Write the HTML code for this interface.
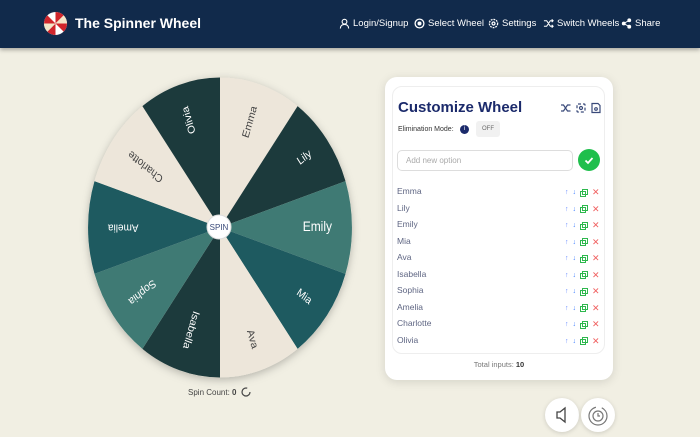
<!DOCTYPE html>
<html><head><meta charset="utf-8"><style>
*{margin:0;padding:0;box-sizing:border-box}
body{width:700px;height:428px;overflow:hidden;background:#f1efe3;font-family:"Liberation Sans",sans-serif;position:relative}
.hdr{position:absolute;left:0;top:0;width:700px;height:48px;background:#112a4b;box-shadow:0 2px 4px rgba(0,0,0,.3)}
.brand{position:absolute;left:75px;top:15px;color:#fff;font-weight:bold;font-size:14px}
.nav{position:absolute;top:18px;color:#fff;font-size:9.5px;display:flex;align-items:center;gap:3px}
.panel{position:absolute;left:385px;top:77px;width:228px;height:303px;background:#fff;border-radius:12px;box-shadow:0 2px 10px rgba(0,0,0,.12)}
.card{position:absolute;left:7px;top:9px;width:213px;height:268px;border:1px solid #eee;border-radius:10px}
.title{position:absolute;left:12px;top:20px;font-size:15px;font-weight:bold;color:#1b2a6b}
.row{position:absolute;left:12px;font-size:8.5px;color:#5f6683}
.bbtn{position:absolute;width:34px;height:34px;border-radius:50%;background:#fff;box-shadow:0 1px 5px rgba(0,0,0,.15)}
</style></head><body>
<div class="hdr">
<svg style="position:absolute;left:43px;top:11px" width="25" height="25" viewBox="-12 -12 24 24">
<circle r="11.5" fill="#fff" stroke="#1a2a4a" stroke-width="1"/>
<g fill="#d0252b"><path d="M0 0L0 -11A11 11 0 0 1 7.8 -7.8Z"/><path d="M0 0L11 0A11 11 0 0 1 7.8 7.8Z"/><path d="M0 0L0 11A11 11 0 0 1 -7.8 7.8Z"/><path d="M0 0L-11 0A11 11 0 0 1 -7.8 -7.8Z"/></g>
<g fill="#f3e6c8"><path d="M0 0L7.8 -7.8A11 11 0 0 1 11 0Z"/><path d="M0 0L-7.8 7.8A11 11 0 0 1 -11 0Z"/></g>
</svg>
<div class="brand">The Spinner Wheel</div>
<div class="nav" style="left:339px"><svg width="11" height="11" viewBox="0 0 12 12" fill="none" stroke="#fff" stroke-width="1.2"><circle cx="6" cy="4" r="2.6"/><path d="M1.5 11.5c0-3 2-4.5 4.5-4.5s4.5 1.5 4.5 4.5"/></svg>Login/Signup</div>
<div class="nav" style="left:414px"><svg width="11" height="11" viewBox="0 0 12 12" fill="none" stroke="#fff" stroke-width="1.4"><circle cx="6" cy="6" r="4.8"/><circle cx="6" cy="6" r="1.5" fill="#fff"/></svg>Select Wheel</div>
<div class="nav" style="left:488px"><svg width="11" height="11" viewBox="0 0 12 12" fill="none" stroke="#fff" stroke-width="1.4"><circle cx="6" cy="6" r="4.5" stroke-dasharray="2 1"/><circle cx="6" cy="6" r="1.6"/></svg>Settings</div>
<div class="nav" style="left:543px"><svg width="11" height="11" viewBox="0 0 12 12" fill="none" stroke="#fff" stroke-width="1.2"><path d="M1 3h3l4 6h3M1 9h3l4-6h3M9.5 1.5l1.5 1.5-1.5 1.5M9.5 7.5l1.5 1.5-1.5 1.5"/></svg>Switch Wheels</div>
<div class="nav" style="left:621px"><svg width="11" height="11" viewBox="0 0 12 12" fill="#fff" stroke="#fff" stroke-width="1"><circle cx="9" cy="2.5" r="1.6"/><circle cx="3" cy="6" r="1.6"/><circle cx="9" cy="9.5" r="1.6"/><path d="M9 2.5L3 6L9 9.5" fill="none"/></svg>Share</div>
</div>

<svg style="position:absolute;left:0;top:0" width="700" height="428">
<defs><filter id="sh" x="-20%" y="-20%" width="140%" height="140%"><feDropShadow dx="0" dy="2" stdDeviation="4" flood-opacity="0.25"/></filter></defs>
<g transform="translate(220,227.5) scale(1,1.136)">
<circle r="132" fill="#ede6da" filter="url(#sh)"/>
</g>
<g transform="translate(220,227.5) scale(1,1.136)" font-family="Liberation Sans, sans-serif">
<path d="M0 0L0 -132A132 132 0 0 1 77.6 -106.8Z" fill="#ede6da"/>
<path d="M0 0L77.6 -106.8A132 132 0 0 1 125.5 -40.8Z" fill="#1c3a3c"/>
<path d="M0 0L125.5 -40.8A132 132 0 0 1 125.5 40.8Z" fill="#3f7a74"/>
<path d="M0 0L125.5 40.8A132 132 0 0 1 77.6 106.8Z" fill="#1e5a60"/>
<path d="M0 0L77.6 106.8A132 132 0 0 1 0 132Z" fill="#ede6da"/>
<path d="M0 0L0 132A132 132 0 0 1 -77.6 106.8Z" fill="#1c3a3c"/>
<path d="M0 0L-77.6 106.8A132 132 0 0 1 -125.5 40.8Z" fill="#3f7a74"/>
<path d="M0 0L-125.5 40.8A132 132 0 0 1 -125.5 -40.8Z" fill="#1e5a60"/>
<path d="M0 0L-125.5 -40.8A132 132 0 0 1 -77.6 -106.8Z" fill="#ede6da"/>
<path d="M0 0L-77.6 -106.8A132 132 0 0 1 0 -132Z" fill="#1c3a3c"/>
<g font-size="10" text-anchor="end" dominant-baseline="middle">
<text transform="rotate(-72) translate(112,0)" fill="#444">Emma</text>
<text transform="rotate(-36) translate(112,0)" fill="#fff">Lily</text>
<text transform="rotate(0) translate(112,0)" fill="#fff" font-size="12">Emily</text>
<text transform="rotate(36) translate(112,0)" fill="#fff">Mia</text>
<text transform="rotate(72) translate(112,0)" fill="#444">Ava</text>
<text transform="rotate(108) translate(112,0)" fill="#fff">Isabella</text>
<text transform="rotate(144) translate(112,0)" fill="#fff">Sophia</text>
<text transform="rotate(180) translate(112,0)" fill="#fff">Amelia</text>
<text transform="rotate(216) translate(112,0)" fill="#444">Charlotte</text>
<text transform="rotate(252) translate(112,0)" fill="#fff">Olivia</text>
</g>
</g>
<circle cx="219" cy="227" r="12" fill="#fff" stroke="#ddd"/>
<text x="219" y="230" font-size="8" fill="#3a4a7a" text-anchor="middle" font-family="Liberation Sans, sans-serif">SPIN</text>
<text x="188" y="395" font-size="8" fill="#444" font-family="Liberation Sans, sans-serif">Spin Count: <tspan font-weight="bold">0</tspan></text>
<circle cx="246" cy="392" r="4" fill="none" stroke="#444" stroke-width="1.2" stroke-dasharray="20 5"/>
</svg>

<div class="panel">
<div class="card">
<div class="title" style="left:5px;top:12px">Customize Wheel</div>
<svg style="position:absolute;left:167px;top:15px" width="45" height="12" viewBox="0 0 45 12" fill="none" stroke="#3a4a7a" stroke-width="1.2"><path d="M1 3h2.5l4 6h3M1 9h2.5l4-6h3"/><rect x="17" y="2" width="8" height="8" rx="1" stroke-dasharray="3 2"/><circle cx="21" cy="6" r="1.5"/><path d="M32 1.5h6l2 2v7h-8z"/><circle cx="36" cy="7" r="1.3"/></svg>
<div style="position:absolute;left:5px;top:39px;font-size:7px;color:#333">Elimination Mode:</div>
<div style="position:absolute;left:67px;top:38px;width:9px;height:9px;border-radius:50%;background:#1b2a6b;color:#fff;font-size:6px;text-align:center;line-height:9px">i</div>
<div style="position:absolute;left:83px;top:34px;width:24px;height:16px;background:#f1f1f1;border-radius:3px;font-size:6px;color:#666;text-align:center;line-height:16px">OFF</div>
<div style="position:absolute;left:4px;top:63px;width:176px;height:21px;border:1px solid #ddd;border-radius:5px;font-size:8px;color:#aaa;padding-left:8px;line-height:19px">Add new option</div>
<div style="position:absolute;left:185px;top:62px;width:22px;height:22px;border-radius:50%;background:#1fbf4c"><svg width="22" height="22" viewBox="0 0 22 22"><path d="M7.5 11.5l2.5 2.5 4.5-5" fill="none" stroke="#fff" stroke-width="1.8"/></svg></div>
</div>
<div class="row" style="top:109px">Emma</div>
<div class="row" style="top:125.5px">Lily</div>
<div class="row" style="top:142px">Emily</div>
<div class="row" style="top:158.5px">Mia</div>
<div class="row" style="top:175px">Ava</div>
<div class="row" style="top:191.5px">Isabella</div>
<div class="row" style="top:208px">Sophia</div>
<div class="row" style="top:224.5px">Amelia</div>
<div class="row" style="top:241px">Charlotte</div>
<div class="row" style="top:257.5px">Olivia</div>
<div id="acts"></div>
<div style="position:absolute;left:0;width:228px;top:283px;text-align:center;font-size:7.5px;color:#777">Total inputs: <b style="color:#333">10</b></div>
</div>
<script>
var h='';for(var i=0;i<10;i++){var t=109+i*16.5+1;h+='<div style="position:absolute;left:180px;top:'+t+'px;font-size:7px;display:flex;gap:4px;align-items:center"><span style="color:#6a8cff">↑</span><span style="color:#3a7cff">↓</span><svg width="8" height="8" viewBox="0 0 8 8" fill="none" stroke="#2db84d" stroke-width="1"><rect x="0.5" y="2.5" width="5" height="5"/><rect x="2.5" y="0.5" width="5" height="5"/></svg><span style="color:#f06060;font-size:9px">✕</span></div>'}
document.getElementById('acts').innerHTML=h;
</script>
<div class="bbtn" style="left:545px;top:398px"><svg width="34" height="34" viewBox="0 0 34 34" fill="none" stroke="#444" stroke-width="1.3"><path d="M12 14v6h3l5 4V10l-5 4z"/></svg></div>
<div class="bbtn" style="left:581px;top:398px"><svg width="34" height="34" viewBox="0 0 34 34" fill="none" stroke="#777" stroke-width="1.2"><circle cx="17" cy="18" r="9" stroke-dasharray="40 6"/><circle cx="17" cy="18" r="5"/><path d="M17 15v3h2"/></svg></div>
</body></html>
